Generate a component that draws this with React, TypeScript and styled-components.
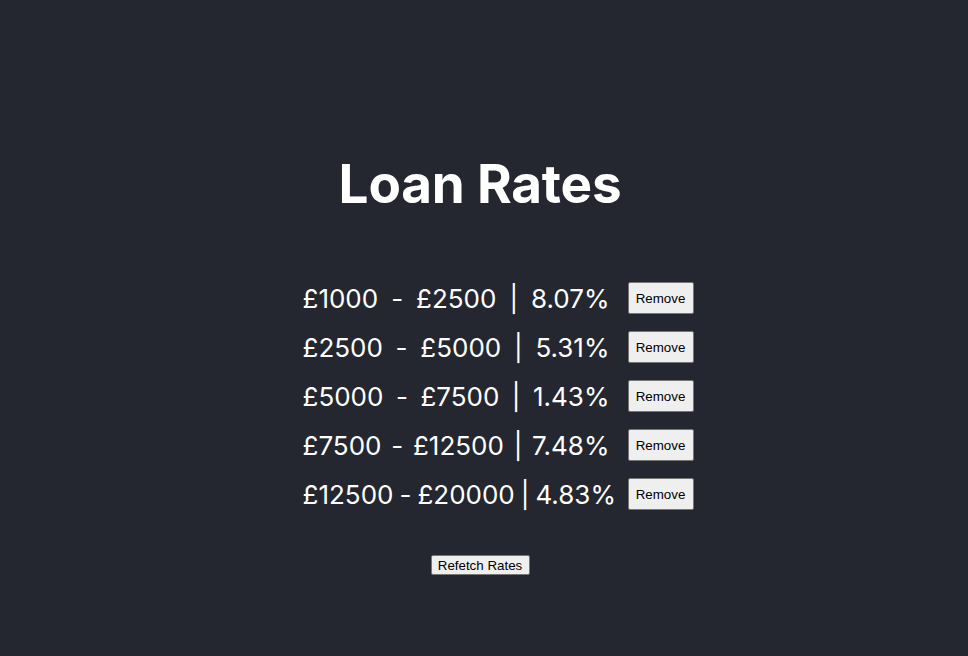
import React, { useState } from "react";
import styled, { createGlobalStyle } from "styled-components";

const GlobalStyle = createGlobalStyle`
  html, body {
    margin: 0;
    padding: 0;
    background: #24272f;
  }
  body {
    font-family: Inter, "Noto Sans", sans-serif;
    color: #ffffff;
  }
`;

const Page = styled.main`
  min-height: 100vh;
  box-sizing: border-box;
  display: flex;
  flex-direction: column;
  align-items: center;
  padding: 152px 8px 0 0;
`;

const Title = styled.h1`
  margin: 0;
  font-family: Inter, "Noto Sans", sans-serif;
  font-weight: 700;
  font-size: 53px;
  line-height: 65px;
  color: #ffffff;
  letter-spacing: -0.2px;
`;

const RateList = styled.ul`
  list-style: none;
  margin: 65px 0 0;
  padding: 0 0 0 36px;
  display: flex;
  flex-direction: column;
  gap: 17px;
`;

const RateRow = styled.li`
  display: flex;
  align-items: center;
  gap: 18px;
  height: 32px;
`;

const RateText = styled.div`
  width: 307px;
  display: flex;
  justify-content: space-between;
  gap: 6px;
  font-size: 26px;
  line-height: 32px;
  padding-top: 2px;
  white-space: nowrap;
  color: #ffffff;
`;

const Button = styled.button<{ $size?: "large" | "small" }>`
  font-family: "Liberation Sans", Arial, sans-serif;
  font-size: 13.33px;
  color: #000000;
  background: #efefef;
  border: 1px solid #767676;
  border-radius: 2px;
  box-sizing: border-box;
  cursor: pointer;
  width: ${(p) => (p.$size === "large" ? "66px" : "auto")};
  height: ${(p) => (p.$size === "large" ? "32px" : "20px")};
  padding: ${(p) => (p.$size === "large" ? "0" : "0 6px")};
`;

const RefetchButton = styled(Button)`
  margin-top: 45px;
  width: 99px;
`;

const initialRates = [
  { from: 1000, to: 2500, rate: "8.07" },
  { from: 2500, to: 5000, rate: "5.31" },
  { from: 5000, to: 7500, rate: "1.43" },
  { from: 7500, to: 12500, rate: "7.48" },
  { from: 12500, to: 20000, rate: "4.83" },
];

export default function App() {
  const [rates, setRates] = useState(initialRates);

  return (
    <>
      <GlobalStyle />
      <Page>
        <Title>Loan Rates</Title>
        <RateList>
          {rates.map((r, i) => (
            <RateRow key={`${r.from}-${r.to}`}>
              <RateText>
                <span>£{r.from}</span>
                <span>-</span>
                <span>£{r.to}</span>
                <span>|</span>
                <span>{r.rate}%</span>
              </RateText>
              <Button
                $size="large"
                onClick={() => setRates(rates.filter((_, j) => j !== i))}
              >
                Remove
              </Button>
            </RateRow>
          ))}
        </RateList>
        <RefetchButton $size="small" onClick={() => setRates(initialRates)}>
          Refetch Rates
        </RefetchButton>
      </Page>
    </>
  );
}
